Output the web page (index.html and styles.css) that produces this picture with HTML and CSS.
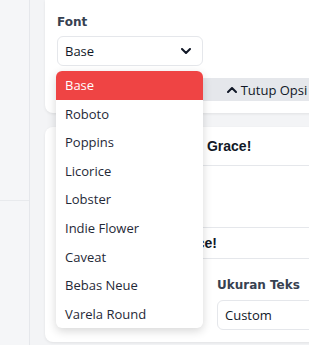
FILE: index.html
```html
<!DOCTYPE html>
<html lang="id">

<head>
    <meta charset="UTF-8">
    <meta name="viewport" content="width=device-width, initial-scale=1.0">
    <title>Pengaturan Kartu</title>
    <link rel="stylesheet" href="styles.css">
</head>

<body>
    <div class="layout">
        <aside class="sidebar">
            <div class="side-item"></div>
        </aside>

        <main class="main">
            <section class="card card-top">
                <div class="field-grid">
                    <div class="field">
                        <label class="field-label">Font</label>
                        <div class="select">
                            <span>Base</span>
                            <svg class="chev" width="10" height="6" viewBox="0 0 10 6">
                                <path d="M1 1l4 4 4-4" fill="none" stroke="#111827" stroke-width="2" stroke-linecap="round" stroke-linejoin="round"/>
                            </svg>
                        </div>
                        <ul class="menu">
                            <li class="menu-item active">Base</li>
                            <li class="menu-item">Roboto</li>
                            <li class="menu-item">Poppins</li>
                            <li class="menu-item">Licorice</li>
                            <li class="menu-item">Lobster</li>
                            <li class="menu-item">Indie Flower</li>
                            <li class="menu-item">Caveat</li>
                            <li class="menu-item">Bebas Neue</li>
                            <li class="menu-item">Varela Round</li>
                        </ul>
                    </div>
                </div>
                <button class="toggle-btn">
                    <svg width="10" height="6" viewBox="0 0 10 6">
                        <path d="M1 5l4-4 4 4" fill="none" stroke="#111827" stroke-width="2" stroke-linecap="round" stroke-linejoin="round"/>
                    </svg>
                    Tutup Opsi
                </button>
            </section>

            <section class="card card-preview">
                <div class="preview-row row-head">Halo, selamat datang Grace!</div>
                <div class="preview-row row-body"></div>
                <div class="preview-row row-foot"><span class="foot-text">Terima kasih, Grace!</span></div>

                <div class="field-grid lower">
                    <div class="field"></div>
                    <div class="field">
                        <label class="field-label">Ukuran Teks</label>
                        <div class="select"><span>Custom</span></div>
                    </div>
                </div>
            </section>
        </main>
    </div>
</body>

</html>
```

FILE: styles.css
```css
body {
    margin: 0;
    overflow: hidden;
    background-color: #f3f4f6;
    font-family: "Open Sans", Arial, sans-serif;
    font-size: 13px;
    color: #1f2937;
}

.layout {
    display: flex;
    height: 345px;
}

.sidebar {
    width: 29px;
    flex-shrink: 0;
    background-color: #f5f6f8;
    border-right: 1px solid #e5e7eb;
}

.side-item {
    height: 200px;
    border-bottom: 1px solid #e8eaed;
}

.main {
    padding-left: 15px;
    display: flex;
    flex-direction: column;
    gap: 14px;
}

.card {
    width: 420px;
    background-color: #fff;
    border-radius: 8px;
    box-shadow: 0 1px 3px rgba(0, 0, 0, 0.08);
    padding: 12px;
}

.card-top {
    padding-top: 14px;
    border-top-left-radius: 0;
    border-top-right-radius: 0;
}

.field-grid {
    display: grid;
    grid-template-columns: 146px 146px 1fr;
    column-gap: 14px;
}

.field {
    position: relative;
}

.field-label {
    display: block;
    font-family: "DejaVu Sans", Verdana, sans-serif;
    font-weight: bold;
    font-size: 12px;
    line-height: 16px;
    color: #374151;
    margin-bottom: 6px;
}

.select {
    height: 30px;
    box-sizing: border-box;
    border: 1px solid #e5e7eb;
    border-radius: 6px;
    padding: 0 11px 0 7px;
    display: flex;
    align-items: center;
    justify-content: space-between;
    font-size: 13px;
    color: #111827;
    background-color: #fff;
}

.toggle-btn {
    display: flex;
    align-items: center;
    justify-content: center;
    gap: 4px;
    width: 100%;
    height: 23px;
    margin-top: 12px;
    border: none;
    background-color: #e5e7eb;
    font-family: "Open Sans", Arial, sans-serif;
    font-size: 13px;
    color: #111827;
    padding: 0;
}

.menu {
    position: absolute;
    top: 57px;
    left: -1px;
    width: 147px;
    margin: 0;
    padding: 0;
    list-style: none;
    background-color: #fff;
    border-radius: 6px;
    box-shadow: 0 3px 10px rgba(0, 0, 0, 0.16);
    overflow: hidden;
    z-index: 10;
}

.menu-item {
    height: 28.6px;
    line-height: 28.6px;
    padding-left: 9px;
    font-size: 13px;
    color: #1f2937;
}

.menu-item.active {
    background-color: #ef4444;
    color: #fff;
}

.card-preview {
    padding-top: 0;
}

.preview-row {
    font-family: "Liberation Sans", Arial, sans-serif;
    font-weight: bold;
    font-size: 14px;
    color: #111827;
    border-bottom: 1px solid #e5e7eb;
    display: flex;
    align-items: center;
    white-space: nowrap;
}

.row-head {
    height: 38px;
    padding-left: 6px;
}

.row-body {
    height: 61px;
}

.row-foot {
    height: 30px;
}

.foot-text {
    width: 160px;
    text-align: right;
}

.lower {
    margin-top: 18px;
}

.lower .field-label {
    margin-bottom: 7px;
}
```
